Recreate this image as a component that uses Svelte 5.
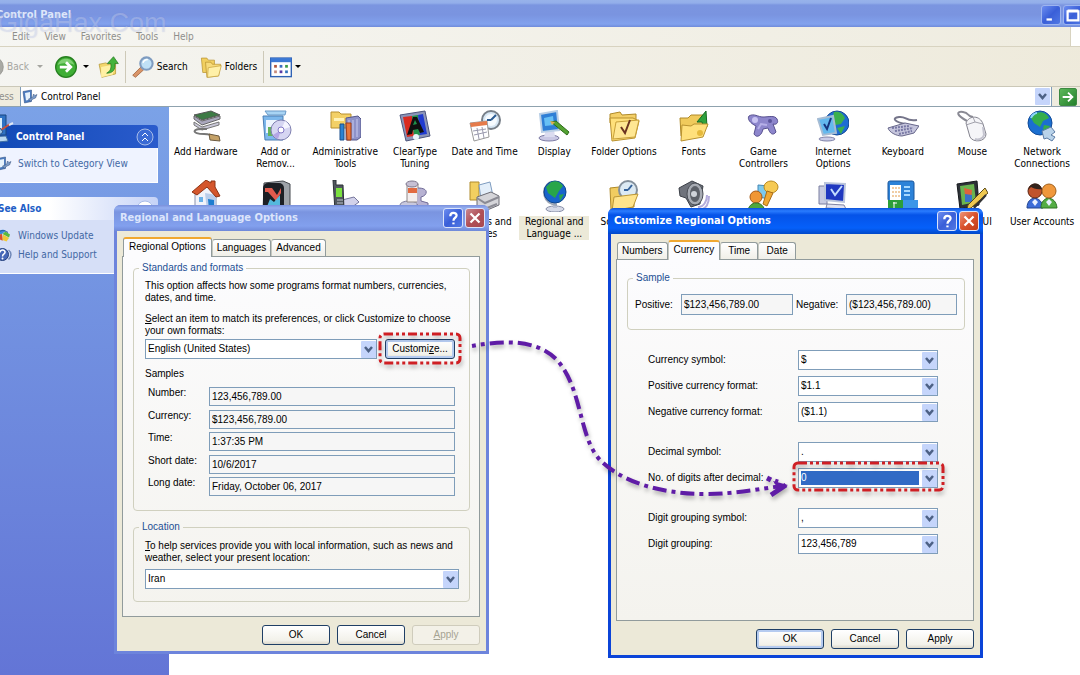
<script lang="ts">
  interface Applet {
    label: string;
    icon: string;
    selected?: boolean;
  }

  interface Field {
    id: string;
    label: string;
    value: string;
    highlighted?: boolean;
  }

  const menus = ["File", "Edit", "View", "Favorites", "Tools", "Help"];

  // artwork for the 32x32 applet icons
  const art: Record<string, string> = {
    hardware: `<path d="M4 5l17-4 9 4-18 5z" fill="#3d7a45" stroke="#555"/><path d="M4 6l8 5 18-5v3l-18 6-8-6z" fill="#a9a7bd" stroke="#666"/><path d="M4 12l8 5 17-5v3l-17 5-8-5z" fill="#c9c8d8" stroke="#777"/><path d="M17 19c-16-1-16 5-3 5 6 0 8 1 9 3" fill="none" stroke="#777" stroke-width="2"/><path d="M19 24l10 2 1 5-10-1z" fill="#c5a268" stroke="#6b5a40"/>`,
    programs: `<path d="M5 1h21l-1 4H8z" fill="#a8d4f4" stroke="#6a9ac8"/><path d="M3 6h20v24H5z" fill="#7db8ec" stroke="#4b7eb4"/><path d="M6 10h12v13H6z" fill="#eef6ff"/><path d="M8 17h8v9H8z" fill="#63b35c"/><circle cx="21" cy="20" r="10" fill="#d6d6f2" stroke="#7f80b0"/><path d="M21 20l4-9a10 10 0 0 1 5 6z" fill="#f5f5ff"/><path d="M21 20l-8 5a10 10 0 0 0 5 4z" fill="#b4a6e6"/><circle cx="21" cy="20" r="3" fill="#fff" stroke="#8478c8"/>`,
    admin: `<path d="M2 2h8l2 2h10v14H2z" fill="#f3d066" stroke="#b89030"/><path d="M5 8h10v3H5z" fill="#fff3b8"/><path d="M17 8l12-2 3 3v18l-4 3H17z" fill="#8e92c8" stroke="#55588c"/><path d="M20 10v18M24 10v18M28 9v18" stroke="#c8cbf0"/><path d="M11 14h4v16h-4z" fill="#2b82d0" stroke="#1a4f8c"/><path d="M17 13h5v17h-4z" fill="#e8763a" stroke="#a04018"/>`,
    cleartype: `<path d="M1 5l25-4 5 25-24 5z" fill="#8b94b8" stroke="#4d567c"/><path d="M4 7l9-1 2 20-7 1z" fill="#d92a20"/><path d="M13 6l6-1 2 20-6 1z" fill="#20914a"/><path d="M19 5l5-1 4 20-7 1z" fill="#203bd0"/><path d="M8 25l6-18h4l7 15-4 1-2-4-5 1-1 4zM14 15l4-1-2-4z" fill="#101010"/><circle cx="17" cy="27" r="3" fill="#e8f5fa"/>`,
    date: `<circle cx="22" cy="10" r="9" fill="#d7e7f4" stroke="#777f88" stroke-width="2"/><circle cx="22" cy="10" r="6" fill="#f6fbff"/><path d="M22 10l5-5M22 10h-4" stroke="#2c5c92" stroke-width="2"/><path d="M1 13l17-2 2 16-15 4z" fill="#fff" stroke="#999"/><path d="M1 13l17-2v4L2 17z" fill="#e57b4b"/><path d="M4 21l13-2M5 25l13-3M8 18l2 11M13 17l2 11" stroke="#9a9aae"/>`,
    display: `<ellipse cx="11" cy="28" rx="10" ry="3" fill="#c9c8e4" stroke="#7c7ba4"/><path d="M8 19h8l1 8H6z" fill="#dbdcf0"/><path d="M2 4l17-3 2 19-17 2z" fill="#2f7fd6" stroke="#b9cfe6" stroke-width="2"/><path d="M6 8l9-2 1 9-9 1z" fill="#67c0f5"/><path d="M13 12l5-1 13 11-2 3z" fill="#53a232" stroke="#2e6c1a"/><path d="M12 11l5 1-3 3z" fill="#e0b050"/>`,
    folderOptions: `<path d="M2 4l10-2 2 3 14-1v9H2z" fill="#f4d068" stroke="#b08a28"/><path d="M2 8h23l6 3-4 17-23 3z" fill="#ffe07a" stroke="#b9912e"/><path d="M5 29l3-17 23-2-4 17z" fill="#ffe793" stroke="#c8a038"/><path d="M13 17l4 6 5-13" fill="none" stroke="#6b3320" stroke-width="2"/>`,
    fonts: `<path d="M2 8h8l3-3h12v21H3z" fill="#f0ca5c" stroke="#b08a28"/><path d="M19 12L28 1l1 16-4-1-1-4z" fill="#2fa23d" stroke="#176b24"/><path d="M4 15l9 1 3-2h14l-5 13-22 4z" fill="#ffe07c" stroke="#b99230"/><circle cx="22" cy="23" r="3" fill="#e6b93c"/>`,
    game: `<path d="M2 6c5-3 9 1 14 1s12-2 14 2c2 4-1 6-4 5l3 8c-3 4-6 2-8-4l-5 1c-1 6-6 10-9 5l2-8C3 13 0 9 2 6z" fill="#8d86cc" stroke="#57508f"/><circle cx="8" cy="10" r="3" fill="#c9c4f2"/><circle cx="23" cy="11" r="2" fill="#5b559c"/><path d="M11 19l3-5 6 1" stroke="#b6b0e8" stroke-width="2" fill="none"/>`,
    internet: `<circle cx="20" cy="13" r="12" fill="#1e6cd2" stroke="#154a93"/><path d="M17 2c6-1 9 2 11 6l-4 6-6 1-3-6zM20 18l8-2-4 8z" fill="#3cb04c"/><ellipse cx="10" cy="29" rx="8" ry="2" fill="#c9cce8" stroke="#8083a8"/><path d="M1 9l15-3 3 17-13 2z" fill="#64b9ee" stroke="#a6bcd4" stroke-width="2"/><path d="M7 14l3 5 4-11" fill="none" stroke="#17357e" stroke-width="2"/>`,
    keyboard: `<path d="M18 14C8 12 4 8 12 7s6 5 18 3" fill="none" stroke="#75758a" stroke-width="2"/><path d="M1 18l17-5 14 3-5 7-12 3c-6 0-13-4-14-8z" fill="#c5c5dc" stroke="#66668a"/><path d="M5 18l17-2M8 21l18-3M12 24l13-3" stroke="#7878a4" stroke-width="2" stroke-dasharray="2 1"/>`,
    mouse: `<path d="M11 11C0 5 0 1 7 2s3 4 10 5" fill="none" stroke="#8a8a94" stroke-width="2"/><path d="M10 13c3-8 14-8 17 1l3 10c0 8-13 9-16 3z" fill="#f5f5f8" stroke="#83838e"/><path d="M10 15l9-3 8 2M19 12l-2-5" fill="none" stroke="#a2a2ac"/><path d="M27 17l1 8c-1 4-6 5-9 4" stroke="#c4c4cf" stroke-width="2" fill="none"/>`,
    network: `<circle cx="14" cy="13" r="12" fill="#1b6fd0" stroke="#124b98"/><path d="M10 3c7-2 11 1 13 5l-6 3-3 6-6-4-3-5zM18 15l6 1-4 6-3-3z" fill="#35ad4c"/><path d="M5 8c1-3 4-5 6-5" stroke="#8cd6f8" stroke-width="2" fill="none"/><path d="M16 21l9-4 4 5-4 3 4 2-3 4-5-3-3 1z" fill="#b9d3ea" stroke="#5c7ca4"/>`,
    home: `<path d="M5 14l11-8 10 8v15l-9 2-12-4z" fill="#f1f3fa" stroke="#8b93ad"/><path d="M15 13l11 2v14l-9 2z" fill="#b9cdea"/><path d="M2 12L16 0l5 3V1h4v6l5 9-4 1-9-10-10 8z" fill="#d4562c" stroke="#8e3414"/><path d="M18 19l6 1v9l-5 1z" fill="#1e7dd0"/><path d="M9 17h4v5H9z" fill="#6bb1e8"/>`,
    graphics: `<path d="M4 3l19-2 7 3v26l-5 2H3z" fill="#9ea3a9" stroke="#45494e"/><rect x="3" y="3" width="21" height="28" rx="5" fill="#1c1f24"/><path d="M5 8h7l5 7 4-7v5l-5 8-8-9H5z" fill="#e15a4d"/><path d="M6 29l4-10 4 3 6-7v14z" fill="#55b9dd"/>`,
    phone: `<path d="M13 20l12-3 5 5-11 8-8-2z" fill="#d2d2ea" stroke="#77779c"/><path d="M4 0h3v5h7l1 25-9 1z" fill="#50575e" stroke="#2c3136"/><path d="M7 8h6v9H7z" fill="#7be03f"/><path d="M8 20h6M8 23h6M8 26h6" stroke="#bcc4cc"/>`,
    power: `<ellipse cx="10" cy="25" rx="9" ry="4" fill="#c8c8dd" stroke="#7c7c9c"/><path d="M8 4h11v18H8z" fill="#f3eeee" stroke="#8f8787"/><ellipse cx="13" cy="4" rx="6" ry="3" fill="#c6c0d4" stroke="#7d768c"/><path d="M9 8h9v5H9z" fill="#e26a40"/><path d="M19 8c12 0 9 8 3 9v4l7 2v7h-9l-2-6" fill="#b7b2d2" stroke="#716c98"/>`,
    printers: `<path d="M1 2h9v18H1z" fill="#f2cf60" stroke="#b08c2c"/><path d="M10 5l11-3 3 14-12 3z" fill="#e4effa" stroke="#7e9cc0"/><path d="M8 17l14-5 8 4v9l-14 6-8-5z" fill="#d5d5d9" stroke="#6c6c74"/><path d="M8 18l8 5 14-6M18 28l10-4" fill="none" stroke="#8b8b94" stroke-width="2"/>`,
    regional: `<ellipse cx="17" cy="29" rx="9" ry="3" fill="#d6dae8" stroke="#8990a8"/><path d="M15 22h4v6h-4z" fill="#b7bed2"/><path d="M12 2C2 9 5 24 19 25" fill="none" stroke="#9aa4b4" stroke-width="2"/><circle cx="17" cy="12" r="11" fill="#1864cc" stroke="#0e458e"/><path d="M13 2c6-2 9 0 12 4l-4 5-4 7-7-5-2-6zM21 15l5-1-4 7z" fill="#28a64a"/>`,
    tasks: `<path d="M2 8l9-1 3 3 12-1v18l-23 3z" fill="#f1cc60" stroke="#b08a28"/><circle cx="20" cy="10" r="9" fill="#dceaf4" stroke="#84909c" stroke-width="2"/><path d="M20 10l4-5M20 10h-4" stroke="#35629a" stroke-width="2"/><path d="M6 17l24-3-5 13-21 4z" fill="#ffe48c" stroke="#bc9634"/>`,
    sounds: `<path d="M20 27c6 0 9-6 9-12M23 30c6-2 8-8 8-14" fill="none" stroke="#b4acdc" stroke-width="2"/><path d="M1 8L14 1l11 5-3 18-9 3-5-9-6-2z" fill="#6f737c" stroke="#3c4048"/><ellipse cx="17" cy="14" rx="8" ry="11" fill="#a7abb3" stroke="#4a4e56"/><ellipse cx="17" cy="14" rx="5" ry="8" fill="#5c6068"/><circle cx="16" cy="14" r="3" fill="#cfd3d9"/>`,
    speech: `<path d="M11 5l11 1 1 13-12-2z" fill="#7cc9ee" stroke="#4487b4"/><ellipse cx="24" cy="7" rx="7" ry="6" fill="#f6ca54" stroke="#b98a20"/><path d="M20 11l6 2-6 13-4-2z" fill="#f0a832" stroke="#a86c18"/><circle cx="9" cy="17" r="6" fill="#f09634" stroke="#a85a14"/><path d="M1 32c0-12 16-12 17 0z" fill="#4fa83e" stroke="#2c701e"/>`,
    system: `<path d="M2 6h8v18H2z" fill="#c9cce2" stroke="#7a7ea0"/><path d="M8 3l20 1-1 18-19-2z" fill="#2038c0" stroke="#bcc6dc" stroke-width="2"/><path d="M14 9l4 6 7-9" fill="none" stroke="#c4dcff" stroke-width="2"/><path d="M10 24l17 1 2 4-20-1z" fill="#dfe1f0" stroke="#8084a4"/>`,
    taskbar: `<rect x="1" y="1" width="26" height="20" rx="2" fill="#2c82d8" stroke="#1a579c"/><path d="M3 5h11v15H3z" fill="#fff"/><path d="M5 8h8M5 12h8M5 16h8" stroke="#e29a4a" stroke-dasharray="2 1"/><path d="M17 7h6M17 11h6M17 15h6" stroke="#a7d8ff" stroke-width="2"/><path d="M1 20h15v10H1z" fill="#2c9e38"/><path d="M16 20h15v10H16z" fill="#3c96e8"/><path d="M6 23h4M7 22v6" stroke="#fff"/>`,
    tablet: `<path d="M1 4l20-3 2 24-19 4z" fill="#2e3238" stroke="#15181c"/><path d="M4 6l14-2 2 18-14 3z" fill="#6ab450"/><path d="M8 8l8 2-1 12-5-1z" fill="#e0643c"/><path d="M9 14l7 1v7H9z" fill="#3a72c8"/><path d="M29 8L12 25l-1 4 4-1 17-15z" fill="#efc850" stroke="#5c4a18"/><path d="M30 15L18 28" stroke="#333" stroke-width="2"/>`,
    users: `<path d="M1 28c0-13 15-13 16 0z" fill="#3c6cd8" stroke="#23458f"/><circle cx="9" cy="11" r="7" fill="#c0532c" stroke="#5e2412"/><path d="M2 10c2-8 11-9 14-1-5 1-9-1-11-2z" fill="#33231c"/><path d="M15 28c0-13 15-13 16 0z" fill="#54ad45" stroke="#2e7422"/><circle cx="23" cy="11" r="7" fill="#f0983c" stroke="#a0601c"/><path d="M9 19l-3 3 3 4 3-4zM23 19l-3 3 3 4 3-4z" fill="#e8f0ff"/>`,
    panel: `<path d="M2 5l17-3v23L5 28z" fill="#4c7cc0" stroke="#27487c"/><path d="M6 8l10-2v15L8 23z" fill="#e6f2fc"/><path d="M13 20l8-3 2-7 3 3 4-2-3 7-5 2-6 5z" fill="#7c9cc8" stroke="#334c78"/>`,
    panelTask: `<path d="M2 2h22v20H6z" fill="#2f72c4" stroke="#1b4680"/><path d="M6 5h14v13H8z" fill="#d9edfb"/><path d="M4 24l20-1 2 5-19 2z" fill="#b8d6f0" stroke="#3f6ea4"/><path d="M16 19l12-8" stroke="#c8503c" stroke-width="2"/><path d="M13 18l5-3 3 4-5 4z" fill="#9cc4e8" stroke="#2c558c"/><path d="M27 12l4-2" stroke="#dfe8f4" stroke-width="2"/>`,
    update: `<path d="M3 12C5 2 16 2 19 6l-7 6z" fill="#3c8cdc"/><path d="M3 13l9-1 2 13C8 25 3 20 3 13z" fill="#d85030"/><path d="M13 12l6-5 9 6-2 6z" fill="#58b840"/><path d="M14 13l12 7-5 7-8-3z" fill="#f0c838"/><path d="M2 12C8 4 16 3 24 9" fill="none" stroke="#2a5898" stroke-width="2"/>`,
    help: `<circle cx="13" cy="15" r="12" fill="#4668b8" stroke="#24407c" stroke-width="2"/><path d="M8 11c0-7 11-6 10 0-1 4-5 3-5 8" fill="none" stroke="#fff" stroke-width="3"/><circle cx="13" cy="23" r="2" fill="#fff"/><path d="M25 6c7 5 6 14 0 19" fill="none" stroke="#7088b8" stroke-width="3"/>`,
    up: `<path d="M3 12l10-2 3 2 11-3v17L7 31z" fill="#f3d66c" stroke="#b1912c"/><path d="M6 16l20-4-3 15-17 4z" fill="#fff0a4"/><path d="M14 25c6-3 7-8 6-14h-5l9-10 7 10h-5c1 9-3 14-12 14z" fill="#43b33c" stroke="#1f741c"/>`,
    search: `<path d="M1 28l12-12 4 4L5 31z" fill="#d99468" stroke="#94542c"/><circle cx="21" cy="11" r="9" fill="#bfe0f6" stroke="#7f9cc0" stroke-width="3"/><path d="M16 10c1-4 4-5 7-5" fill="none" stroke="#fff" stroke-width="2"/>`,
    folders: `<path d="M2 3h8l2 3h9v18H4z" fill="#f1cf60" stroke="#b58f2c"/><path d="M8 9h8l2 3h12l-3 17-17 2z" fill="#f7db7c" stroke="#b58f2c"/><path d="M12 17l19-3-4 15-16 2z" fill="#fff0a8" stroke="#c5a03c"/>`,
    views: `<rect x="1" y="3" width="30" height="27" fill="#fff" stroke="#2f62b4" stroke-width="2"/><path d="M1 3h30v6H1z" fill="#3b78d4"/><path d="M6 13h4v4H6z" fill="#b0563c"/><path d="M14 13h4v4h-4z" fill="#3c6cc0"/><path d="M22 13h4v4h-4z" fill="#3c9c48"/><path d="M6 21h4v4H6z" fill="#c88c7c"/><path d="M14 21h4v4h-4z" fill="#5a3ca4"/><path d="M22 21h4v4h-4z" fill="#3474bc"/>`,
  };

  const applets: Applet[] = [
    { label: "Add Hardware", icon: "hardware" },
    { label: "Add or Remov...", icon: "programs" },
    { label: "Administrative Tools", icon: "admin" },
    { label: "ClearType Tuning", icon: "cleartype" },
    { label: "Date and Time", icon: "date" },
    { label: "Display", icon: "display" },
    { label: "Folder Options", icon: "folderOptions" },
    { label: "Fonts", icon: "fonts" },
    { label: "Game Controllers", icon: "game" },
    { label: "Internet Options", icon: "internet" },
    { label: "Keyboard", icon: "keyboard" },
    { label: "Mouse", icon: "mouse" },
    { label: "Network Connections", icon: "network" },
    { label: "", icon: "home" },
    { label: "", icon: "graphics" },
    { label: "", icon: "phone" },
    { label: "", icon: "power" },
    { label: "Printers and Faxes", icon: "printers" },
    { label: "Regional and Language ...", icon: "regional", selected: true },
    { label: "Scheduled Tasks", icon: "tasks" },
    { label: "", icon: "sounds" },
    { label: "", icon: "speech" },
    { label: "", icon: "system" },
    { label: "", icon: "taskbar" },
    { label: "Tablet UI", icon: "tablet" },
    { label: "User Accounts", icon: "users" },
  ];

  const samples: Field[] = [
    { id: "number", label: "Number:", value: "123,456,789.00" },
    { id: "currency", label: "Currency:", value: "$123,456,789.00" },
    { id: "time", label: "Time:", value: "1:37:35 PM" },
    { id: "short-date", label: "Short date:", value: "10/6/2017" },
    { id: "long-date", label: "Long date:", value: "Friday, October 06, 2017" },
  ];

  const currencyGroups: Field[][] = [
    [
      { id: "symbol", label: "Currency symbol:", value: "$" },
      { id: "positive-format", label: "Positive currency format:", value: "$1.1" },
      { id: "negative-format", label: "Negative currency format:", value: "($1.1)" },
    ],
    [
      { id: "decimal", label: "Decimal symbol:", value: "." },
      { id: "digits", label: "No. of digits after decimal:", value: "0", highlighted: true },
    ],
    [
      { id: "group-symbol", label: "Digit grouping symbol:", value: "," },
      { id: "grouping", label: "Digit grouping:", value: "123,456,789" },
    ],
  ];

  let regionalTab = $state("Regional Options");
  let currencyTab = $state("Currency");
</script>

{#snippet icon(name: string, size: string)}
  <svg class="icon {size}" viewBox="0 0 32 32" aria-hidden="true">{@html art[name]}</svg>
{/snippet}

{#snippet chevron()}
  <svg class="chevron" viewBox="0 0 15 17" aria-hidden="true">
    <rect width="15" height="17" rx="1" />
    <path d="M4 6l3.5 4 3.5-4" />
  </svg>
{/snippet}

{#snippet combo(id: string, value: string, highlighted: boolean)}
  <span class="combo" class:highlighted>
    <select {id}>
      <option>{value}</option>
    </select>
    {@render chevron()}
  </span>
{/snippet}

{#snippet titleBar(title: string)}
  <header class="caption">
    <h2>{title}</h2>
    <button class="caption-button" type="button" aria-label="Help">
      <svg viewBox="0 0 20 20" aria-hidden="true">
        <path d="M7 8c0-5 7-4.5 7-1 0 3-3.5 2.5-3.5 6" />
        <path d="M10.5 15v2" />
      </svg>
    </button>
    <button class="caption-button close" type="button" aria-label="Close">
      <svg viewBox="0 0 20 20" aria-hidden="true"><path d="M5 5l10 10M15 5L5 15" /></svg>
    </button>
  </header>
{/snippet}

<main class="desktop">
  <section class="explorer">
    <header class="explorer-title">
      <h1>Control Panel</h1>
      <button class="caption-button" type="button" aria-label="Minimize">
        <svg viewBox="0 0 20 20" aria-hidden="true"><path d="M5 15h6" /></svg>
      </button>
      <button class="caption-button" type="button" aria-label="Maximize">
        <svg viewBox="0 0 20 20" aria-hidden="true"><path d="M4 5h12M4 6h12v10H4z" /></svg>
      </button>
    </header>

    <nav class="menu-bar" aria-label="Menu">
      {#each menus as menu (menu)}
        <button type="button">{menu}</button>
      {/each}
      <span class="throbber"></span>
    </nav>

    <div class="toolbar">
      <button class="tool back" type="button" disabled>
        <svg class="icon medium" viewBox="0 0 32 32" aria-hidden="true">
          <circle cx="16" cy="16" r="15" fill="#a9a9a4" stroke="#8c8c88" />
          <path d="M25 16H9m7-7l-7 7 7 7" fill="none" stroke="#eee" stroke-width="4" />
        </svg>
        Back
        <span class="caret"></span>
      </button>
      <button class="tool forward" type="button" aria-label="Forward">
        <svg class="icon medium" viewBox="0 0 32 32" aria-hidden="true">
          <circle cx="16" cy="16" r="15" fill="#3fae35" stroke="#26801f" stroke-width="2" />
          <path d="M4 13c3-12 21-12 24 0-7-4-17-3-24 0z" fill="#7fcf72" />
          <path d="M7 16h16m-7-7l7 7-7 7" fill="none" stroke="#fff" stroke-width="4" />
        </svg>
        <span class="caret"></span>
      </button>
      <button class="tool" type="button" aria-label="Up">{@render icon("up", "medium")}</button>
      <span class="divider"></span>
      <button class="tool" type="button">{@render icon("search", "medium")}Search</button>
      <button class="tool" type="button">{@render icon("folders", "medium")}Folders</button>
      <span class="divider"></span>
      <button class="tool" type="button" aria-label="Views">
        {@render icon("views", "medium")}
        <span class="caret"></span>
      </button>
    </div>

    <div class="address-bar">
      <label for="address">Address</label>
      <div class="address">
        {@render icon("panel", "small")}
        <input id="address" value="Control Panel" />
        {@render chevron()}
      </div>
      <button class="go" type="button" aria-label="Go">
        <svg viewBox="0 0 18 18" aria-hidden="true"><path d="M3 9h11M9 4l5 5-5 5" /></svg>
      </button>
    </div>

    <div class="content">
      <aside class="tasks">
        <section class="task-box primary">
          <h3>
            {@render icon("panelTask", "large")}
            <span>Control Panel</span>
            <svg class="collapse" viewBox="0 0 18 18" aria-hidden="true">
              <circle cx="9" cy="9" r="8" />
              <path d="M6 8l3-3 3 3M6 13l3-3 3 3" />
            </svg>
          </h3>
          <div class="task-links">
            <a href="#category">{@render icon("panel", "small")}Switch to Category View</a>
          </div>
        </section>
        <section class="task-box">
          <h3>
            <span>See Also</span>
            <svg class="collapse" viewBox="0 0 18 18" aria-hidden="true">
              <circle cx="9" cy="9" r="8" />
              <path d="M6 8l3-3 3 3M6 13l3-3 3 3" />
            </svg>
          </h3>
          <div class="task-links">
            <a href="#update">{@render icon("update", "small")}Windows Update</a>
            <a href="#help">{@render icon("help", "small")}Help and Support</a>
          </div>
        </section>
      </aside>

      <ul class="applets">
        {#each applets as applet (applet.icon)}
          <li class:selected={applet.selected}>
            {@render icon(applet.icon, "large")}
            <span>{applet.label}</span>
          </li>
        {/each}
      </ul>
    </div>
  </section>

  <div class="watermark">GigaHax.Com</div>

  <section class="dialog regional inactive">
    {@render titleBar("Regional and Language Options")}
    <div class="tabs" role="tablist">
      {#each ["Regional Options", "Languages", "Advanced"] as tab (tab)}
        <button
          type="button"
          role="tab"
          aria-selected={regionalTab === tab}
          onclick={() => (regionalTab = tab)}>{tab}</button
        >
      {/each}
    </div>
    <div class="sheet">
      <fieldset class="standards">
        <legend>Standards and formats</legend>
        <p>This option affects how some programs format numbers, currencies, dates, and time.</p>
        <label for="locale"
          ><u>S</u>elect an item to match its preferences, or click Customize to choose your own formats:</label
        >
        <div class="locale-row">
          {@render combo("locale", "English (United States)", false)}
          <button class="push default" type="button">Customi<u>z</u>e...</button>
        </div>
        <h4>Samples</h4>
        <div class="samples">
          {#each samples as sample (sample.id)}
            <div class="sample">
              <label for={sample.id}>{sample.label}</label>
              <input id={sample.id} value={sample.value} readonly />
            </div>
          {/each}
        </div>
      </fieldset>
      <fieldset class="location">
        <legend>Location</legend>
        <label for="location"
          ><u>T</u>o help services provide you with local information, such as news and weather, select your present
          location:</label
        >
        {@render combo("location", "Iran", false)}
      </fieldset>
    </div>
    <footer>
      <button class="push" type="button">OK</button>
      <button class="push" type="button">Cancel</button>
      <button class="push" type="button" disabled><u>A</u>pply</button>
    </footer>
  </section>

  <section class="dialog customize">
    {@render titleBar("Customize Regional Options")}
    <div class="tabs" role="tablist">
      {#each ["Numbers", "Currency", "Time", "Date"] as tab (tab)}
        <button
          type="button"
          role="tab"
          aria-selected={currencyTab === tab}
          onclick={() => (currencyTab = tab)}>{tab}</button
        >
      {/each}
    </div>
    <div class="sheet">
      <fieldset class="preview">
        <legend>Sample</legend>
        <label for="positive">Positive:</label>
        <input id="positive" value="$123,456,789.00" readonly />
        <label for="negative">Negative:</label>
        <input id="negative" value="($123,456,789.00)" readonly />
      </fieldset>
      <div class="formats">
        {#each currencyGroups as group}
          <div class="format-group">
            {#each group as field (field.id)}
              <div class="format">
                <label for={field.id}>{field.label}</label>
                {@render combo(field.id, field.value, !!field.highlighted)}
              </div>
            {/each}
          </div>
        {/each}
      </div>
    </div>
    <footer>
      <button class="push default" type="button">OK</button>
      <button class="push" type="button">Cancel</button>
      <button class="push" type="button">Apply</button>
    </footer>
  </section>

  <!-- markers that lead from Customize... to the digits setting -->
  <svg class="markers" width="1080" height="675" aria-hidden="true">
    <rect class="ring" x="380" y="334" width="80" height="29" rx="4" />
    <rect class="ring" x="794" y="463" width="149" height="27" rx="4" />
    <path
      class="route"
      d="M472 346C500 341 535 338 556 359C583 388 578 436 600 460C622 482 660 494 706 494C735 494 758 489 782 486"
    />
    <path class="barb" d="M767 478l4 2M775 481l3 1M771 495l15-10" />
    <path class="tip" d="M773 481l15 4-14 8 3-6z" />
  </svg>
</main>

<style>
  :global(body) {
    overflow: hidden;
    background: #fff;
  }
  .desktop {
    --ui: "DejaVu Sans Condensed", "DejaVu Sans", sans-serif;
    --dialog: "Liberation Sans", Arial, sans-serif;
    --face: #ece9d8;
    --edge: #7f9db9;
    position: relative;
    min-height: 100vh;
    overflow: hidden;
    font: 10px/12px var(--ui);
    color: #000;
  }
  h1, h2, h3, h4, p, ul {
    margin: 0;
    padding: 0;
  }
  h4 {
    font-weight: normal;
  }
  button, input, select {
    font: inherit;
    color: inherit;
    margin: 0;
    border-radius: 0;
  }
  .icon {
    display: block;
    flex: none;
  }
  .small {
    width: 16px;
    height: 16px;
  }
  .medium {
    width: 22px;
    height: 22px;
  }
  .large {
    width: 32px;
    height: 32px;
  }

  /* explorer window, hanging over both sides of the screen */
  .explorer {
    display: flex;
    flex-direction: column;
    height: 100vh;
    margin: 0 -28px 0 -36px;
  }
  .explorer-title {
    display: flex;
    align-items: center;
    gap: 2px;
    height: 27px;
    box-sizing: border-box;
    padding: 3px 5px 0 32px;
    background: linear-gradient(#97b2ea 0, #93aeea 3px, #7b95e0 5px, #7a94e0 15px, #82a2ee 24px, #6f8bda 27px);
  }
  .explorer-title h1 {
    flex: 1;
    font: bold 11px/16px var(--ui);
    color: #dde6fa;
  }
  .explorer-title .caption-button:last-child {
    margin-right: 20px;
  }
  .caption-button {
    flex: none;
    width: 20px;
    height: 20px;
    padding: 0;
    border: 1px solid #dbe4fb;
    border-radius: 3px;
    background: linear-gradient(135deg, #6c8df0, #3a5fd8 50%, #5078e4);
  }
  .explorer .caption-button {
    border-color: #9db4f0;
  }
  .caption-button.close {
    background: linear-gradient(135deg, #ef9578, #d9512c 50%, #c03c18);
  }
  .inactive .caption-button.close {
    background: linear-gradient(135deg, #c88890, #b05058 50%, #a84850);
  }
  .caption-button svg {
    display: block;
    width: 18px;
    height: 18px;
    fill: none;
    stroke: #fff;
    stroke-width: 2.5;
  }
  .menu-bar {
    display: flex;
    gap: 1px;
    height: 20px;
    padding-left: 11px;
    background: linear-gradient(90deg, #f6f6f3, #efecdf);
    border-bottom: 1px solid #d8d3c0;
    box-sizing: border-box;
  }
  .menu-bar button {
    padding: 0 7px;
    border: 0;
    background: none;
    color: #8f8f8b;
  }
  .throbber {
    width: 37px;
    margin-left: auto;
    background: #fff;
    border-left: 1px solid #d8d3c0;
  }
  .toolbar {
    display: flex;
    align-items: center;
    height: 39px;
    padding-left: 14px;
    background: linear-gradient(90deg, #f5f5f2, #eeeadb);
  }
  .tool {
    display: flex;
    align-items: center;
    gap: 3px;
    height: 30px;
    padding: 0 4px;
    border: 0;
    background: none;
  }
  .tool:disabled {
    color: #a5a5a0;
  }
  .tool.forward {
    gap: 6px;
    margin-left: 4px;
  }
  .caret {
    border: 3px solid transparent;
    border-top-color: currentColor;
    border-bottom: 0;
  }
  .back .caret {
    margin-left: 5px;
  }
  .divider {
    width: 1px;
    height: 32px;
    margin: 0 2px;
    background: #cdc9b8;
  }
  .divider + .tool {
    margin-right: 4px;
  }
  .address-bar {
    display: flex;
    align-items: center;
    gap: 4px;
    height: 21px;
    box-sizing: border-box;
    padding: 0 31px 0 14px;
    border-top: 1px solid #cbc8b8;
    border-bottom: 1px solid #8fa2ae;
    background: #efecdf;
  }
  .address-bar label {
    width: 38px;
    color: #8f8f8b;
  }
  .address {
    display: flex;
    flex: 1;
    align-items: center;
    gap: 3px;
    height: 19px;
    box-sizing: border-box;
    padding: 0 1px;
    border: 1px solid #7f9db9;
    border-width: 0 1px;
    background: #fff;
  }
  .address input {
    flex: 1;
    min-width: 0;
    padding: 0;
    border: 0;
    background: none;
  }
  .go {
    width: 18px;
    height: 18px;
    margin-left: 3px;
    padding: 0;
    border: 1px solid #3d8a42;
    border-radius: 2px;
    background: linear-gradient(135deg, #5cb85a, #23802c);
  }
  .go svg {
    display: block;
    width: 16px;
    height: 16px;
    fill: none;
    stroke: #fff;
    stroke-width: 2;
  }
  .chevron {
    display: block;
    width: 15px;
    height: 17px;
    fill: none;
    stroke: #4d6185;
    stroke-width: 2.5;
    pointer-events: none;
  }
  .chevron rect {
    fill: #c5d5fb;
    stroke: none;
  }
  .content {
    display: flex;
    flex: 1;
    min-height: 0;
  }
  .tasks {
    flex: none;
    width: 205px;
    box-sizing: border-box;
    padding: 18px 11px 0 14px;
    background: linear-gradient(#7ba2e7, #6375d6);
  }
  .task-box {
    margin-bottom: 14px;
  }
  .task-box h3 {
    display: flex;
    align-items: center;
    gap: 2px;
    height: 23px;
    padding: 0 4px 0 20px;
    border-radius: 4px 4px 0 0;
    font: bold 10px/23px var(--ui);
    color: #215dc6;
    background: linear-gradient(90deg, #fff 40%, #c6d3f7);
  }
  .task-box.primary h3 {
    padding-left: 4px;
    color: #fff;
    background: linear-gradient(90deg, #0f48b4, #2a5bcc);
  }
  .task-box h3 span {
    flex: 1;
  }
  .task-box h3 .icon {
    margin-top: -16px;
  }
  .collapse {
    width: 18px;
    height: 18px;
    fill: #fff;
    stroke: #3f66b8;
  }
  .primary .collapse {
    fill: #3a6ad4;
    stroke: #fff;
  }
  .collapse circle {
    stroke: #a8bce8;
  }
  .task-links {
    display: flex;
    flex-direction: column;
    gap: 3px;
    padding: 8px 6px 10px 17px;
    border: 1px solid #fff;
    border-top: 0;
    background: #d6dff7;
  }
  .primary .task-links {
    background: #eff3ff;
  }
  .task-links a {
    display: flex;
    align-items: center;
    gap: 6px;
    white-space: nowrap;
    text-decoration: none;
    color: #4268a4;
  }
  .applets {
    display: grid;
    flex: 1;
    grid-template-columns: repeat(13, 1fr);
    grid-auto-rows: 70px;
    padding: 3px 31px 0 2px;
    list-style: none;
    background: #fff;
  }
  .applets li {
    display: flex;
    flex-direction: column;
    align-items: center;
    gap: 4px;
    text-align: center;
  }
  .applets span {
    padding: 0 1px;
  }
  .selected span {
    background: var(--face);
  }
  .watermark {
    position: absolute;
    top: 6px;
    left: -3px;
    font: 27px/34px var(--dialog);
    color: rgb(255 255 255 / 25%);
    text-shadow: 0 0 1px rgb(90 110 190 / 25%);
    pointer-events: none;
  }

  /* property dialogs */
  .dialog {
    position: absolute;
    width: 375px;
    box-sizing: border-box;
    border: 3px solid #0b44d8;
    border-top: 0;
    border-radius: 7px 7px 0 0;
    background: var(--face);
    font: 10px/12px var(--dialog);
  }
  .dialog.inactive {
    border-color: #6d84dc;
  }
  .regional {
    top: 205px;
    left: 114px;
  }
  .customize {
    top: 208px;
    left: 608px;
  }
  .caption {
    display: flex;
    align-items: center;
    gap: 2px;
    height: 26px;
    margin: 0 -3px;
    padding: 0 4px 0 6px;
    box-sizing: border-box;
    border-radius: 6px 6px 0 0;
    background: linear-gradient(#0a50d8, #2a7cff 3px, #0553e8 7px, #0560fa 20px, #0148c8);
  }
  .inactive .caption {
    background: linear-gradient(#7a90dc, #94aef0 3px, #7a94e0 7px, #82a0ee 21px, #7089d8);
  }
  .caption h2 {
    flex: 1;
    font: bold 11px/20px var(--ui);
    color: #fff;
  }
  .inactive .caption h2 {
    color: #dce5fb;
  }
  .tabs {
    display: flex;
    align-items: flex-end;
    height: 25px;
    padding: 0 6px;
  }
  .tabs button {
    min-width: 38px;
    height: 17px;
    padding: 0 4px;
    border: 1px solid #919b9c;
    border-bottom: 0;
    border-radius: 3px 3px 0 0;
    background: linear-gradient(#fff, #f0efe8);
  }
  .tabs button + button {
    border-left-color: #c5c8c0;
  }
  .tabs button[aria-selected="true"] {
    height: 20px;
    margin-bottom: -1px;
    padding: 0 5px 3px;
    border-top: 2px solid #f0a830;
    background: #fcfcfe;
  }
  .sheet {
    margin: 0 6px 0 5px;
    padding: 5px 9px 14px 10px;
    border: 1px solid #919b9c;
    background: linear-gradient(#fcfcfe, #f4f3ee);
  }
  fieldset {
    min-width: 0;
    margin: 0;
    padding: 0 11px;
    border: 1px solid #d0d0bf;
    border-radius: 4px;
  }
  legend {
    padding: 0 3px;
    margin-left: -6px;
    color: #1c4f94;
  }
  .standards p {
    margin: 6px 0 9px;
  }
  fieldset > label {
    display: block;
  }
  .locale-row {
    display: grid;
    grid-template-columns: 1fr 70px;
    gap: 8px;
    margin: 2px 3px 9px 0;
  }
  .samples {
    display: flex;
    flex-direction: column;
    justify-content: space-between;
    height: 109px;
    margin: 7px 3px 14px;
  }
  .sample {
    display: grid;
    grid-template-columns: 61px 1fr;
  }
  .dialog input {
    width: 100%;
    min-width: 0;
    height: 19px;
    box-sizing: border-box;
    padding: 0 2px;
    border: 1px solid var(--edge);
    background: #f6f6f6;
  }
  .combo {
    display: grid;
    border: 1px solid var(--edge);
    background: #fff;
  }
  .combo select,
  .combo .chevron {
    grid-area: 1 / 1;
  }
  .combo select {
    width: 100%;
    height: 18px;
    padding: 2px 18px 2px 2px;
    border: 0;
    appearance: none;
    background: none;
  }
  .combo .chevron {
    justify-self: end;
    align-self: center;
  }
  .highlighted select {
    color: #fff;
    background: #316ac5 content-box;
  }
  .location {
    margin-top: 10px;
    padding-bottom: 12px;
  }
  .location label {
    margin: 7px 0 5px;
  }
  .location .combo {
    margin-right: -1px;
  }
  .push {
    height: 20px;
    padding: 0 4px;
    border: 1px solid #1f3f66;
    border-radius: 3px;
    background: linear-gradient(#fff, #f2f1ea 80%, #dcd8cc);
  }
  .push.default {
    box-shadow: inset 0 0 0 2px #b5cbf0;
  }
  .push:disabled {
    border-color: #cfccbc;
    color: #a5a392;
    background: #f3f1e8;
  }
  footer {
    display: grid;
    grid-template-columns: repeat(3, 68px);
    justify-content: end;
    gap: 7px;
    padding: 8px 6px 6px;
  }
  .preview {
    display: grid;
    grid-template-columns: 43px 112px 47px 111px;
    justify-content: space-between;
    align-items: center;
    padding: 10px 7px 14px;
  }
  .preview legend {
    margin-left: -2px;
  }
  .preview input {
    height: 21px;
  }
  .customize .sheet {
    padding: 12px 8px 66px 10px;
  }
  .formats {
    display: grid;
    gap: 20px;
    padding: 20px 27px 0 21px;
  }
  .format-group {
    display: grid;
    gap: 6px;
  }
  .format {
    display: grid;
    grid-template-columns: 1fr 140px;
    align-items: center;
  }

  .markers {
    position: absolute;
    top: 0;
    left: 0;
    fill: none;
    pointer-events: none;
    filter: drop-shadow(1px 3px 2px rgb(0 0 0 / 30%));
  }
  .ring {
    stroke: #cf1f24;
    stroke-width: 3;
    stroke-dasharray: 9 3 3 3 3 3;
  }
  .route {
    stroke: #5f1ca6;
    stroke-width: 4;
    stroke-dasharray: 4 5 4 5 14 5 4 5 14 5 4 5 14 5 4 5 14 5 4 5 14 5 4 5 14 5 4 5;
  }
  .barb {
    stroke: #5f1ca6;
    stroke-width: 5;
  }
  .tip {
    fill: #5f1ca6;
  }
</style>
